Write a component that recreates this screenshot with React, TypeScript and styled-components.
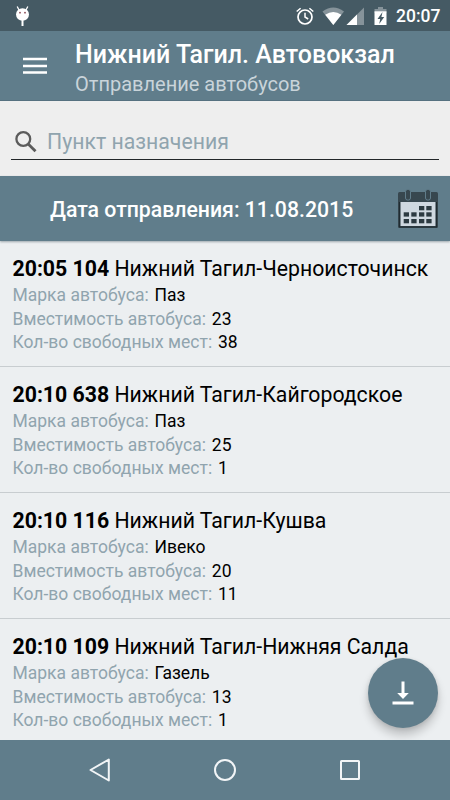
import React from "react";
import styled, { createGlobalStyle } from "styled-components";

const SLATE = "#607d8b";
const PALE = "#eceff1";

const GlobalStyle = createGlobalStyle`
  *, *::before, *::after { box-sizing: border-box; }
  body { margin: 0; background: ${PALE}; }
`;

const Screen = styled.div`
  position: relative;
  display: flex;
  flex-direction: column;
  width: 450px;
  height: 800px;
  overflow: hidden;
  background: ${PALE};
  font-family: Roboto, "Noto Sans", sans-serif;
  white-space: nowrap;
`;

const StatusBar = styled.header`
  display: flex;
  flex: none;
  align-items: center;
  height: 31px;
  padding: 0 9px 0 15px;
  background: #455a64;
`;

const StatusIcons = styled.div`
  display: flex;
  align-items: center;
  margin-left: auto;
`;

const Clock = styled.time`
  width: 45px;
  margin-left: 8px;
  padding-top: 2px;
  color: #fff;
  font-size: 17.5px;
  font-weight: 500;
  line-height: 29px;
`;

const Toolbar = styled.div`
  display: flex;
  flex: none;
  height: 70px;
  padding-left: 23px;
  background: ${SLATE};
  border-bottom: 1px solid #557180;
`;

const MenuButton = styled.button`
  display: flex;
  align-items: center;
  width: 52px;
  padding: 0;
  border: 0;
  background: none;
`;

const Heading = styled.div`
  display: flex;
  flex-direction: column;
  padding-top: 8px;
`;

const Title = styled.h1`
  margin: 0;
  color: #fff;
  font-size: 25px;
  font-weight: 500;
  line-height: 31px;
`;

const Subtitle = styled.span`
  color: #c9d4da;
  font-size: 20px;
  line-height: 29px;
`;

const SearchArea = styled.div`
  flex: none;
  height: 75px;
  padding: 23px 11px 0;
  background: #eeeeee;
`;

const SearchField = styled.div`
  display: flex;
  align-items: center;
  height: 36px;
  padding-left: 3px;
  gap: 9px;
  border-bottom: 1px solid #222628;
`;

const Placeholder = styled.span`
  color: #90a4ae;
  font-size: 21.25px;
  line-height: 30px;
`;

const DateBar = styled.div`
  display: flex;
  flex: none;
  align-items: center;
  justify-content: space-between;
  height: 65px;
  padding: 1px 12px 0 50px;
  background: ${SLATE};
  box-shadow: 0 1px 2px rgba(40, 60, 70, 0.4);
  z-index: 1;
`;

const DateLabel = styled.span`
  padding-top: 2px;
  color: #fff;
  font-size: 21.25px;
  font-weight: 500;
  line-height: 30px;
`;

const List = styled.ul`
  flex: 1;
  min-height: 0;
  margin: 0;
  padding: 0;
  overflow: hidden;
  list-style: none;
`;

const Item = styled.li`
  height: 126px;
  padding: 14px 12.5px 0;
  border-bottom: 1px solid #c8cdd0;
`;

const Route = styled.div`
  height: 28px;
  color: #000;
  font-size: 21.25px;
  line-height: 28px;
`;

const Strong = styled.b`
  font-weight: 700;
`;

const Detail = styled.div`
  height: 23.7px;
  color: #90a4ae;
  font-size: 17.5px;
  line-height: 24px;
`;

const Value = styled.span`
  margin-left: 1.5px;
  color: #000;
`;

const Fab = styled.button`
  position: absolute;
  left: 367.5px;
  top: 657.5px;
  display: flex;
  align-items: center;
  justify-content: center;
  width: 70px;
  height: 70px;
  padding: 0;
  border: 0;
  border-radius: 50%;
  background: ${SLATE};
  box-shadow: 0 7px 10px rgba(0, 0, 0, 0.2), 0 1px 4px rgba(0, 0, 0, 0.1);
`;

const NavBar = styled.nav`
  display: flex;
  flex: none;
  align-items: center;
  justify-content: center;
  gap: 101px;
  height: 60px;
  background: ${SLATE};
  z-index: 1;
`;

const Icon = styled.svg`
  display: block;
  flex: none;
`;

interface Departure {
  time: string;
  number: string;
  route: string;
  brand: string;
  capacity: number;
  free: number;
}

const departures: Departure[] = [
  { time: "20:05", number: "104", route: "Нижний Тагил-Черноисточинск", brand: "Паз", capacity: 23, free: 38 },
  { time: "20:10", number: "638", route: "Нижний Тагил-Кайгородское", brand: "Паз", capacity: 25, free: 1 },
  { time: "20:10", number: "116", route: "Нижний Тагил-Кушва", brand: "Ивеко", capacity: 20, free: 11 },
  { time: "20:10", number: "109", route: "Нижний Тагил-Нижняя Салда", brand: "Газель", capacity: 13, free: 1 },
];

const DroidIcon = () => (
  <Icon width="15" height="22" viewBox="0 0 15 22">
    <path d="M2.2 1.5 4 5M12.8 1.5 11 5" stroke="#fff" strokeWidth="1.3" />
    <ellipse cx="7.5" cy="9.5" rx="6.5" ry="6.2" fill="#fff" />
    <path d="M7.5 15v6" stroke="#fff" strokeWidth="2" />
    <circle cx="5" cy="7.7" r="0.9" fill="#8b4a55" />
    <circle cx="10" cy="7.7" r="0.9" fill="#8b4a55" />
  </Icon>
);

const SignalIcons = () => (
  <Icon width="92" height="20" viewBox="0 0 92 20">
    <g fill="none" stroke="#fff" strokeWidth="1.7">
      <circle cx="9" cy="11" r="7" />
      <path d="M9 6.8V11l3.2 2M.7 5.5 4.600 2.200M17.3 5.5 13.4 2.2" strokeWidth="1.5" />
    </g>
    <path d="M26.5 5.5Q37.3-2.5 48 5.5L37.3 19Z" fill="#fff" opacity=".35" />
    <path d="M29.2 8.8Q37.3 3 45.4 8.8L37.3 19Z" fill="#fff" />
    <path d="M68 1.5V19H50.5Z" fill="#fff" opacity=".35" />
    <path d="M61 8.5V19H50.5Z" fill="#fff" />
    <path d="M78.5 3H82V1h5v2h3.5v4h-12Z" fill="#fff" opacity=".35" />
    <path d="M78.5 5.3h12V19h-12Z" fill="#fff" />
    <path d="m86.5 6-5 7h2.7l-1 5 5-7h-2.8Z" fill="#455a64" />
  </Icon>
);

const MenuIcon = () => (
  <Icon width="24" height="18" viewBox="0 0 24 18">
    <path d="M0 2h24M0 9h24M0 15.500h24" stroke="#fff" strokeWidth="2.5" />
  </Icon>
);

const SearchIcon = () => (
  <Icon width="24" height="24" viewBox="0 0 24 24">
    <circle cx="9.3" cy="9" r="6.9" fill="none" stroke="#5b5b5b" strokeWidth="2.3" />
    <path d="m14.200 14 7.300 7.3" stroke="#5b5b5b" strokeWidth="2.8" />
  </Icon>
);

const cells = [
  [21, 17], [28.3, 17],
  [5.7, 23.3], [13.3, 23.3], [21, 23.3], [28.3, 23.3],
  [5.7, 30], [13.3, 30], [21, 30], [28.3, 30],
];

const CalendarIcon = () => (
  <Icon width="40" height="40" viewBox="0 0 40 40">
    <rect x="0" y="3" width="40" height="36" rx="1.5" fill="#37474f" />
    <rect x="2.5" y="13" width="35" height="24" fill="#cfd8e0" />
    <path d="M1.5 13v25h37V13" fill="none" stroke="#1f2b31" strokeWidth="1.2" />
    {[7.5, 27.5].map((x) => (
      <rect key={x} x={x} y="0.5" width="5" height="10.5" rx="2" fill="#37474f" stroke="#607d8b" strokeWidth="1" />
    ))}
    {cells.map(([x, y]) => (
      <rect key={`${x}-${y}`} x={x} y={y} width="5.3" height="4.3" fill="#2c3a41" />
    ))}
  </Icon>
);

const DownloadIcon = () => (
  <Icon width="22" height="24" viewBox="0 0 22 24">
    <path d="M9.5 0.5h3V12h4.300L11 18 5.200 12h4.300ZM.5 20.500h21v3H.5Z" fill="#fff" />
  </Icon>
);

const BackIcon = () => (
  <Icon width="24" height="26" viewBox="0 0 24 26">
    <path d="M20.800 2.500v21L2.500 13Z" fill="none" stroke="#f2f5f7" strokeWidth="2" strokeLinejoin="round" />
  </Icon>
);

const HomeIcon = () => (
  <Icon width="24" height="24" viewBox="0 0 24 24">
    <circle cx="12" cy="12" r="10" fill="none" stroke="#f2f5f7" strokeWidth="2" />
  </Icon>
);

const RecentsIcon = () => (
  <Icon width="24" height="24" viewBox="0 0 24 24">
    <rect x="3" y="3" width="18" height="18" rx="0.5" fill="none" stroke="#f2f5f7" strokeWidth="2" />
  </Icon>
);

const DepartureItem = ({ time, number, route, brand, capacity, free }: Departure) => (
  <Item>
    <Route><Strong>{time} {number}</Strong> {route}</Route>
    <Detail>Марка автобуса: <Value>{brand}</Value></Detail>
    <Detail>Вместимость автобуса: <Value>{capacity}</Value></Detail>
    <Detail>Кол-во свободных мест: <Value>{free}</Value></Detail>
  </Item>
);

export default function App() {
  return (
    <Screen>
      <GlobalStyle />
      <StatusBar>
        <DroidIcon />
        <StatusIcons>
          <SignalIcons />
          <Clock>20:07</Clock>
        </StatusIcons>
      </StatusBar>
      <Toolbar>
        <MenuButton aria-label="Меню"><MenuIcon /></MenuButton>
        <Heading>
          <Title>Нижний Тагил. Автовокзал</Title>
          <Subtitle>Отправление автобусов</Subtitle>
        </Heading>
      </Toolbar>
      <SearchArea>
        <SearchField>
          <SearchIcon />
          <Placeholder>Пункт назначения</Placeholder>
        </SearchField>
      </SearchArea>
      <DateBar>
        <DateLabel>Дата отправления: 11.08.2015</DateLabel>
        <CalendarIcon />
      </DateBar>
      <List>
        {departures.map((d) => <DepartureItem key={d.route} {...d} />)}
      </List>
      <Fab aria-label="Загрузить"><DownloadIcon /></Fab>
      <NavBar>
        <BackIcon />
        <HomeIcon />
        <RecentsIcon />
      </NavBar>
    </Screen>
  );
}
